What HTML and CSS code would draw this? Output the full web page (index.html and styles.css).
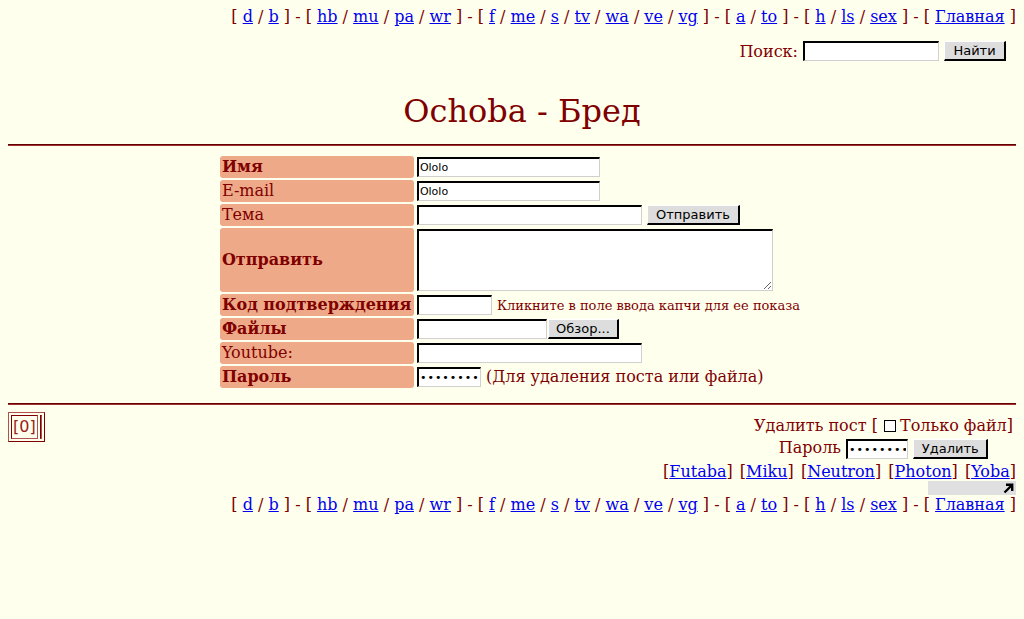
FILE: index.html
```html
<!DOCTYPE html>
<html lang="ru">
<head>
<meta charset="utf-8">
<title>Ochoba - Бред</title>
<link rel="stylesheet" href="styles.css">
</head>
<body>
<div class="boardnav">[ <a href="#">d</a> / <a href="#">b</a> ] - [ <a href="#">hb</a> / <a href="#">mu</a> / <a href="#">pa</a> / <a href="#">wr</a> ] - [ <a href="#">f</a> / <a href="#">me</a> / <a href="#">s</a> / <a href="#">tv</a> / <a href="#">wa</a> / <a href="#">ve</a> / <a href="#">vg</a> ] - [ <a href="#">a</a> / <a href="#">to</a> ] - [ <a href="#">h</a> / <a href="#">ls</a> / <a href="#">sex</a> ] - [ <a href="#">Главная</a> ]</div>

<form class="search">
  <span class="search-label">Поиск:</span>
  <input class="field search-field" type="text">
  <button class="btn search-btn" type="button">Найти</button>
</form>

<h1 class="logo">Ochoba - Бред</h1>
<hr class="rule">

<div class="postarea">
  <table class="postform">
    <tr>
      <td class="label bold">Имя</td>
      <td class="cell"><input class="field w-name" type="text" value="Ololo"></td>
    </tr>
    <tr>
      <td class="label">E-mail</td>
      <td class="cell"><input class="field w-name" type="text" value="Ololo"></td>
    </tr>
    <tr>
      <td class="label">Тема</td>
      <td class="cell"><input class="field w-subject" type="text"> <button class="btn send-btn" type="button">Отправить</button></td>
    </tr>
    <tr>
      <td class="label bold">Отправить</td>
      <td class="cell"><textarea class="field message"></textarea></td>
    </tr>
    <tr>
      <td class="label bold">Код подтверждения</td>
      <td class="cell"><input class="field w-captcha" type="text"> <small class="note">Кликните в поле ввода капчи для ее показа</small></td>
    </tr>
    <tr>
      <td class="label bold">Файлы</td>
      <td class="cell"><span class="filebox"><input class="field w-file" type="text"><button class="btn browse-btn" type="button">Обзор...</button></span></td>
    </tr>
    <tr>
      <td class="label">Youtube:</td>
      <td class="cell"><input class="field w-subject" type="text"></td>
    </tr>
    <tr>
      <td class="label bold">Пароль</td>
      <td class="cell"><input class="field w-pass" type="password" value="12345678"> <span class="hint">(Для удаления поста или файла)</span></td>
    </tr>
  </table>
</div>

<hr class="rule rule-bottom">

<div class="footer">
  <div class="footer-top">
    <table class="pages">
      <tr>
        <td class="page-cell">[0]</td>
        <td class="page-empty"></td>
      </tr>
    </table>

    <div class="userdelete">
      <div class="ud-line">Удалить пост [ <label class="fileonly"><input class="check" type="checkbox">Только файл</label>]</div>
      <div class="ud-line">Пароль <input class="field w-delpass" type="password" value="12345678"> <button class="btn del-btn" type="button">Удалить</button></div>
    </div>
  </div>

  <div class="styles">[<a href="#">Futaba</a>] [<a href="#">Miku</a>] [<a href="#">Neutron</a>] [<a href="#">Photon</a>] [<a href="#">Yoba</a>]</div>

  <div class="widget-row">
    <div class="widget">
      <svg class="widget-arrow" width="11" height="11" viewBox="0 0 11 11"><path d="M1.5 9.5 L9 2 M3 1.8 H9.2 V8" fill="none" stroke="#000" stroke-width="2.4"/></svg>
    </div>
  </div>

  <div class="boardnav boardnav-bottom">[ <a href="#">d</a> / <a href="#">b</a> ] - [ <a href="#">hb</a> / <a href="#">mu</a> / <a href="#">pa</a> / <a href="#">wr</a> ] - [ <a href="#">f</a> / <a href="#">me</a> / <a href="#">s</a> / <a href="#">tv</a> / <a href="#">wa</a> / <a href="#">ve</a> / <a href="#">vg</a> ] - [ <a href="#">a</a> / <a href="#">to</a> ] - [ <a href="#">h</a> / <a href="#">ls</a> / <a href="#">sex</a> ] - [ <a href="#">Главная</a> ]</div>
</div>
</body>
</html>
```

FILE: styles.css
```css
html, body {
  background: #ffffee;
}
body {
  margin: 8px;
  color: #800000;
  font-family: "DejaVu Serif", serif;
  font-size: 16px;
}
a {
  color: #0000ee;
}

.boardnav {
  text-align: right;
  line-height: 18px;
}

.search {
  margin: 15px 10px 0 0;
  height: 20px;
  display: flex;
  justify-content: flex-end;
  align-items: center;
  gap: 5px;
}

.field {
  box-sizing: border-box;
  height: 20px;
  border: 1px solid #d0d0d0;
  border-top: 2px solid #000;
  border-left: 2px solid #000;
  background: #fff;
  font-family: "DejaVu Sans", sans-serif;
  font-size: 11px;
  padding: 0 1px;
  margin: 0;
  vertical-align: middle;
}
.btn {
  box-sizing: border-box;
  height: 20px;
  background: #dddddd;
  border: 1px solid #fff;
  border-right: 2px solid #000;
  border-bottom: 2px solid #000;
  font-family: "DejaVu Sans", sans-serif;
  font-size: 13px;
  color: #000;
  padding: 0 6px;
  margin: 0;
  vertical-align: middle;
}

.search-field { width: 136px; }
.search-btn { width: 62px; }

.logo {
  margin: 30px 0 0;
  padding-left: 20px;
  text-align: center;
  font-weight: normal;
  font-size: 32px;
  line-height: 40px;
  color: #800000;
}

.rule {
  margin: 13px 0 0;
  height: 0;
  border: 0;
  border-top: 1px solid #600000;
  border-bottom: 1px solid #a03030;
}
.rule-bottom {
  margin-top: 13px;
}

.postarea {
  margin-top: 8px;
}
.postform {
  margin: 0 auto;
  border-spacing: 2px;
}
.postform td {
  padding: 0;
}
.label {
  background: #eeaa88;
  border-radius: 3px;
  width: 194px;
  height: 22px;
  padding: 0 2px !important;
  box-sizing: border-box;
  vertical-align: middle;
  line-height: 20px;
}
.bold {
  font-weight: bold;
}
.cell {
  vertical-align: middle;
  padding-left: 1px !important;
  white-space: nowrap;
}
.w-name { width: 183px; }
.w-subject { width: 225px; }
.w-captcha { width: 75px; }
.w-file { width: 130px; }
.w-pass { width: 64px; font-size: 11px; letter-spacing: 1px; }
.w-delpass { width: 62px; font-size: 11px; letter-spacing: 1px; }

.send-btn { width: 93px; }
.browse-btn { width: 71px; margin-left: 1px; }
.message {
  width: 356px;
  height: 62px;
  margin: 1px 0;
  display: block;
  resize: both;
}
.note {
  font-size: 13px;
  margin-right: 4px;
}

.footer {
  margin-top: 7px;
}
.footer-top {
  display: flex;
  justify-content: space-between;
  align-items: flex-start;
}

.userdelete {
  margin: 3px 3px 0 0;
  text-align: center;
}
.ud-line {
  height: 22px;
  line-height: 22px;
  white-space: nowrap;
}
.check {
  width: 12px;
  height: 12px;
  margin: 0 4px 0 1px;
  vertical-align: -1px;
  appearance: none;
  border: 1px solid #000;
  background: #fff;
}
.del-btn { width: 75px; }

.pages {
  border-spacing: 2px;
  border: 1px solid;
  border-color: #b05050 #800000 #800000 #b05050;
}
.pages td {
  border: 1px solid;
  border-color: #800000 #b05050 #b05050 #800000;
  padding: 1px;
}
.page-cell {
  font-family: "DejaVu Sans", sans-serif;
  font-size: 16px;
  line-height: 20px;
  color: #9a2020;
}
.page-empty {
  width: 0;
  padding: 1px 0 !important;
}

.styles {
  text-align: right;
  margin-top: 4px;
  line-height: 18px;
  word-spacing: 2px;
}

.widget-row {
  display: flex;
  justify-content: flex-end;
  margin-top: 0;
}
.widget {
  width: 88px;
  height: 14px;
  background: #e0e0e0;
  display: flex;
  justify-content: flex-end;
  align-items: center;
  padding-right: 2px;
  box-sizing: border-box;
}

.boardnav-bottom {
  margin-top: 1px;
}
```
